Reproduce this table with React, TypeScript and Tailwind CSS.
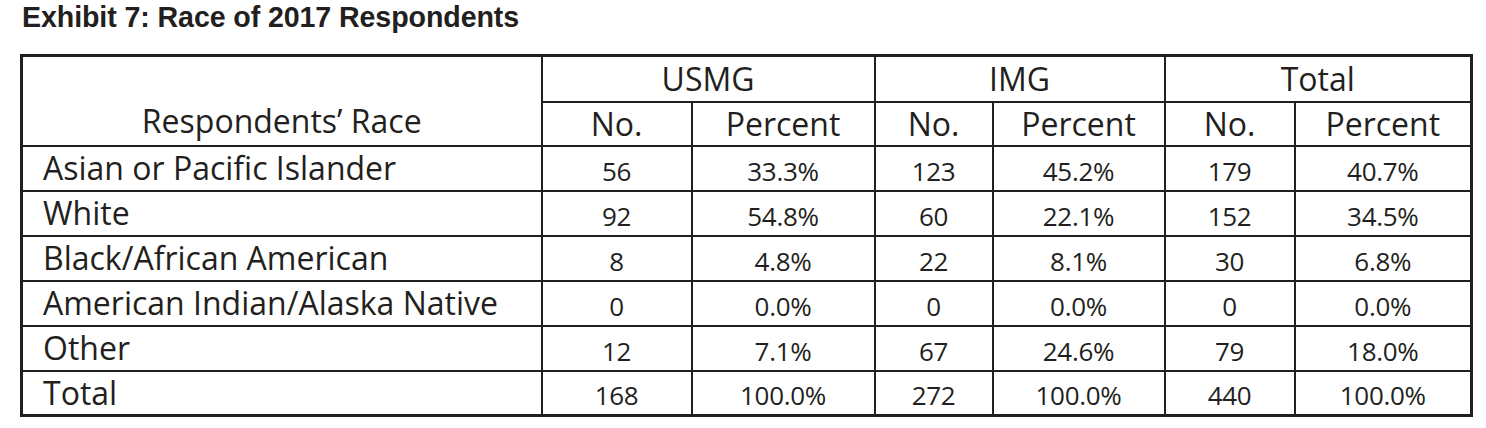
const rows = [
  { race: "Asian or Pacific Islander", usNo: "56", usPct: "33.3%", imgNo: "123", imgPct: "45.2%", totNo: "179", totPct: "40.7%" },
  { race: "White", usNo: "92", usPct: "54.8%", imgNo: "60", imgPct: "22.1%", totNo: "152", totPct: "34.5%" },
  { race: "Black/African American", usNo: "8", usPct: "4.8%", imgNo: "22", imgPct: "8.1%", totNo: "30", totPct: "6.8%" },
  { race: "American Indian/Alaska Native", usNo: "0", usPct: "0.0%", imgNo: "0", imgPct: "0.0%", totNo: "0", totPct: "0.0%" },
  { race: "Other", usNo: "12", usPct: "7.1%", imgNo: "67", imgPct: "24.6%", totNo: "79", totPct: "18.0%" },
  { race: "Total", usNo: "168", usPct: "100.0%", imgNo: "272", imgPct: "100.0%", totNo: "440", totPct: "100.0%" },
];

const cell = "border-2 border-[#231f20]";
const num = `${cell} text-center align-middle pt-[5px] text-[26px] leading-none tracking-[-0.3px]`;
const head = `${cell} font-normal text-center align-middle text-[32px] leading-none`;

export default function App() {
  return (
    <div className="bg-white w-[1486px] h-[428px] text-[#231f20]">
      <h1 className="pl-[22px] pt-[3px] text-[28.6px] leading-[29px] font-bold tracking-[-0.1px] font-['Liberation_Sans',Arial,sans-serif]">
        Exhibit 7: Race of 2017 Respondents
      </h1>

      <table className="mt-[22px] ml-[20px] w-[1450px] table-fixed border-collapse border-[3px] border-[#231f20] font-['Open_Sans',sans-serif]">
        <colgroup>
          <col className="w-[520px]" />
          <col className="w-[150px]" />
          <col className="w-[183px]" />
          <col className="w-[118px]" />
          <col className="w-[172px]" />
          <col className="w-[130px]" />
          <col className="w-[177px]" />
        </colgroup>
        <thead>
          <tr className="h-[46px]">
            <th rowSpan={2} className={`${cell} font-normal text-center align-bottom pb-[8px] text-[32px] leading-none`}>
              Respondents’ Race
            </th>
            <th colSpan={2} className={head}>USMG</th>
            <th colSpan={2} className={head}>IMG</th>
            <th colSpan={2} className={head}>Total</th>
          </tr>
          <tr className="h-[44px]">
            <th className={head}>No.</th>
            <th className={head}>Percent</th>
            <th className={head}>No.</th>
            <th className={head}>Percent</th>
            <th className={head}>No.</th>
            <th className={head}>Percent</th>
          </tr>
        </thead>
        <tbody>
          {rows.map((r) => (
            <tr key={r.race} className="h-[45px]">
              <td className={`${cell} pl-[20px] align-middle text-[32px] leading-none`}>{r.race}</td>
              <td className={num}>{r.usNo}</td>
              <td className={num}>{r.usPct}</td>
              <td className={num}>{r.imgNo}</td>
              <td className={num}>{r.imgPct}</td>
              <td className={num}>{r.totNo}</td>
              <td className={num}>{r.totPct}</td>
            </tr>
          ))}
        </tbody>
      </table>
    </div>
  );
}
